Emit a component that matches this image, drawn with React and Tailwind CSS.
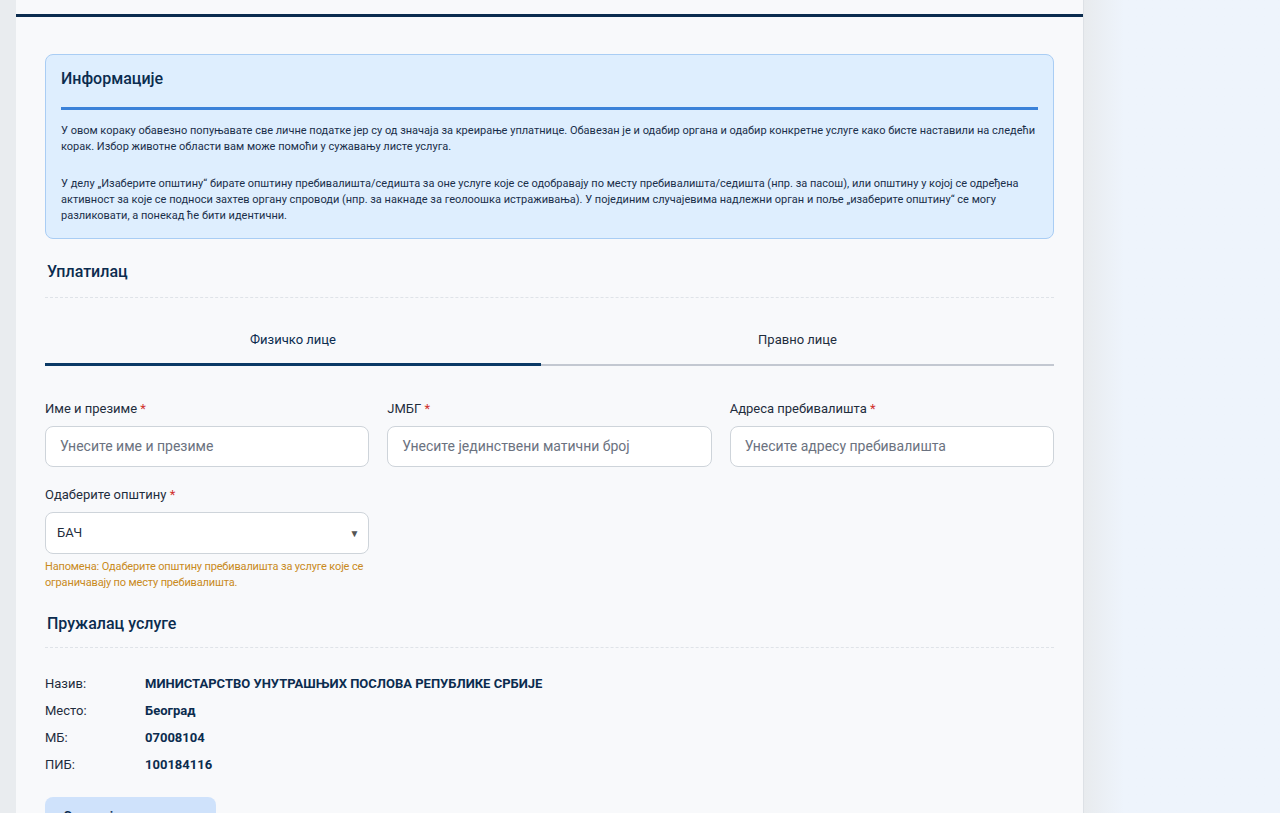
import React from "react";

const font = { fontFamily: "Roboto, 'Noto Sans', sans-serif" };

function Label({ children }) {
  return (
    <div className="text-[13px] leading-[16px] text-[#1f2d3d] mb-[9px]">
      {children} <span className="text-[#d0312d]">*</span>
    </div>
  );
}

function Input({ placeholder }) {
  return (
    <div className="h-[41px] rounded-lg border border-[#ced4da] bg-white flex items-center px-[14px] text-[14px] text-[#6b7280]">
      {placeholder}
    </div>
  );
}

function Row({ label, value }) {
  return (
    <div className="flex items-center h-[27px] text-[13px]">
      <div className="w-[100px] text-[#1f2d3d]">{label}</div>
      <div className="font-bold text-[#0b2c4f]">{value}</div>
    </div>
  );
}

export default function App() {
  return (
    <div style={font} className="flex h-[813px] w-[1280px] overflow-hidden bg-[#eef4fc]">
      <div className="w-[16px] shrink-0 bg-[#e9ecef]" />
      <div className="w-[1068px] shrink-0 bg-[#f8f9fb] border-r border-[#dde1e6] overflow-hidden">
        <div className="h-[14px]" />
        <div className="h-[3px] bg-[#0b2c4f]" />
        <div className="px-[29px] pt-[37px]">
          <div className="rounded-lg border border-[#a9cdf4] bg-[#deeefe] px-[15px] pt-[13px] pb-[14px]">
            <div className="text-[16px] leading-[22px] font-medium text-[#0b2c4f]">Информације</div>
            <div className="mt-[17px] h-[3px] bg-[#3b82d9]" />
            <div className="mt-[13px] text-[11px] leading-[16px] text-[#1a2f4a]">
              <p>
                У овом кораку обавезно попуњавате све личне податке јер су од значаја за креирање уплатнице. Обавезан је и одабир органа и одабир конкретне услуге како бисте наставили на следећи корак. Избор животне области вам може помоћи у сужавању листе услуга.
              </p>
              <p className="mt-[21px]">
                У делу „Изаберите општину“ бирате општину пребивалишта/седишта за оне услуге које се одобравају по месту пребивалишта/седишта (нпр. за пасош), или општину у којој се одређена активност за које се подноси захтев органу спроводи (нпр. за накнаде за геолоошка истраживања). У појединим случајевима надлежни орган и поље „изаберите општину“ се могу разликовати, а понекад ће бити идентични.
              </p>
            </div>
          </div>

          <div className="mt-[22px] pl-[2px] text-[16px] leading-[22px] font-medium text-[#0b2c4f]">Уплатилац</div>
          <div className="mt-[14px] border-t border-dashed border-[#dfe3e8]" />

          <div className="mt-[33px] flex">
            <div className="w-[496px] flex flex-col">
              <div className="text-center text-[13px] leading-[18px] text-[#0b2c4f]">Физичко лице</div>
              <div className="mt-[14px] h-[3px] bg-[#0b3a66]" />
            </div>
            <div className="flex-1 flex flex-col">
              <div className="text-center text-[13px] leading-[18px] text-[#1f2d3d]">Правно лице</div>
              <div className="mt-[15px] h-[2px] bg-[#c3c8d1]" />
            </div>
          </div>

          <div className="mt-[35px] grid grid-cols-3 gap-x-[18px]">
            <div>
              <Label>Име и презиме</Label>
              <Input placeholder="Унесите име и презиме" />
            </div>
            <div>
              <Label>ЈМБГ</Label>
              <Input placeholder="Унесите јединствени матични број" />
            </div>
            <div>
              <Label>Адреса пребивалишта</Label>
              <Input placeholder="Унесите адресу пребивалишта" />
            </div>
            <div className="mt-[20px]">
              <Label>Одаберите општину</Label>
              <div className="h-[42px] rounded-lg border border-[#ced4da] bg-white flex items-center justify-between pl-[11px] pr-[9px] text-[13px] text-[#1f2d3d]">
                <span>БАЧ</span>
                <span className="text-[10px] text-[#555]">▼</span>
              </div>
              <div className="mt-[5px] text-[11px] leading-[16px] tracking-[-0.15px] text-[#c98a1c] pr-[4px]">
                Напомена: Одаберите општину пребивалишта за услуге које се ограничавају по месту пребивалишта.
              </div>
            </div>
          </div>

          <div className="mt-[22px] pl-[2px] text-[16px] leading-[22px] font-medium text-[#0b2c4f]">Пружалац услуге</div>
          <div className="mt-[12px] border-t border-dashed border-[#dfe3e8]" />

          <div className="mt-[22px] flex flex-col">
            <Row label="Назив:" value="МИНИСТАРСТВО УНУТРАШЊИХ ПОСЛОВА РЕПУБЛИКЕ СРБИЈЕ" />
            <Row label="Место:" value="Београд" />
            <Row label="МБ:" value="07008104" />
            <Row label="ПИБ:" value="100184116" />
          </div>

          <div className="mt-[19px] w-[171px] h-[40px] rounded-lg bg-[#cfe2fb] px-[18px] pt-[10px] text-[14px] font-medium text-[#0b2c4f]">
            Сачувај и настави
          </div>
        </div>
      </div>
      <div className="flex-1 bg-gradient-to-r from-[#e8ebee] to-[#eef4fc] to-[40px]" />
    </div>
  );
}
